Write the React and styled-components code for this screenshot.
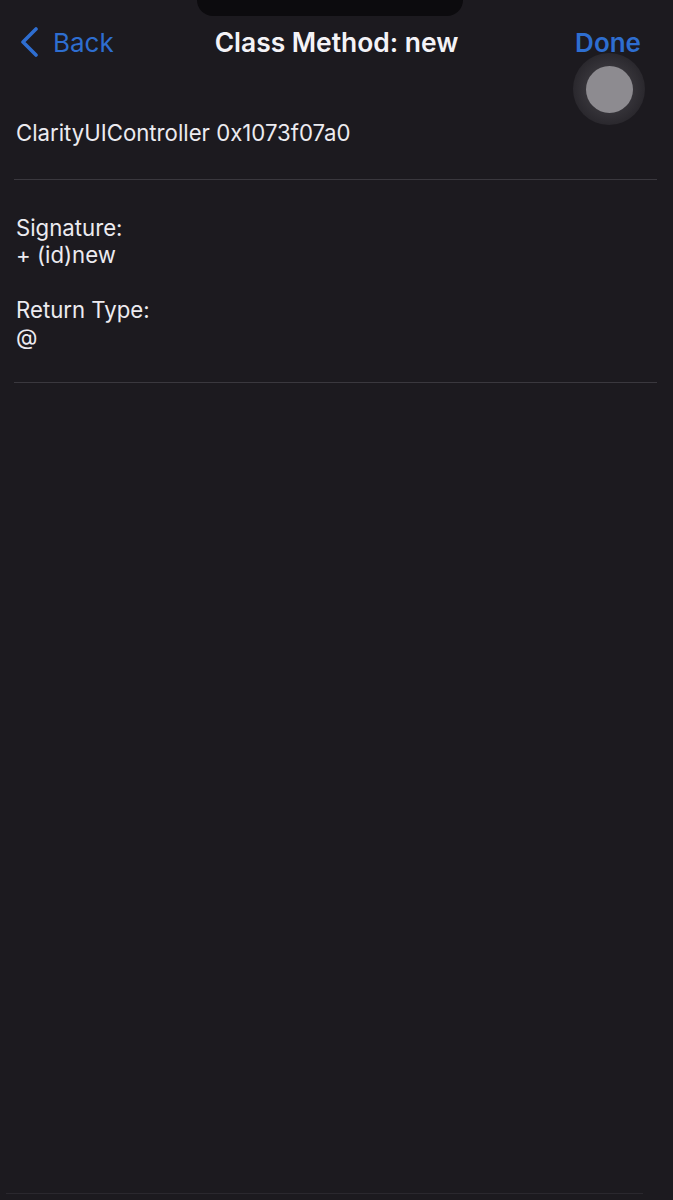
import React from 'react';
import styled, { createGlobalStyle } from 'styled-components';

const GlobalStyle = createGlobalStyle`
  html, body {
    margin: 0;
    padding: 0;
    background: #1c1a1f;
  }
  body {
    font-family: Inter, "Liberation Sans", sans-serif;
    -webkit-font-smoothing: antialiased;
  }
`;

const Screen = styled.div`
  position: relative;
  width: 673px;
  height: 1200px;
  background: #1c1a1f;
  overflow: hidden;
  color: #ecebf0;
`;

const Notch = styled.div`
  position: absolute;
  top: 0;
  left: 197px;
  width: 266px;
  height: 16px;
  background: #0c0b0e;
  border-radius: 0 0 16px 16px;
`;

const NavBar = styled.header`
  display: grid;
  grid-template-columns: 1fr auto 1fr;
  align-items: center;
  height: 84px;
  padding: 0 32px 0 19px;
`;

const NavButton = styled.button`
  display: flex;
  align-items: center;
  gap: 14px;
  justify-self: ${(p) => (p.$right ? 'end' : 'start')};
  background: none;
  border: none;
  padding: 0;
  color: #2e6ed0;
  font-family: inherit;
  font-size: 26px;
  font-weight: ${(p) => (p.$bold ? 600 : 400)};
  cursor: pointer;
`;

const Title = styled.h1`
  margin: 0 0 0 13px;
  font-size: 26.4px;
  font-weight: 600;
  color: #f4f3f7;
`;

const Section = styled.section`
  display: flex;
  flex-direction: column;
  gap: ${(p) => p.$gap || 0}px;
  padding: ${(p) => p.$pad};
  margin: 0 16px 0 14px;
  border-bottom: 1.5px solid #3a383e;
`;

const Field = styled.div`
  display: flex;
  flex-direction: column;
  padding-left: 2px;
`;

const Line = styled.div`
  font-size: 22.2px;
  line-height: 27px;
  color: #ecebf0;
`;

const Touch = styled.div`
  position: absolute;
  left: 573px;
  top: 53px;
  width: 72px;
  height: 72px;
  border-radius: 50%;
  background: radial-gradient(circle, rgba(120,118,124,0.5) 0%, rgba(70,68,74,0.45) 60%, rgba(40,38,44,0) 100%);
  display: flex;
  align-items: center;
  justify-content: center;
`;

const TouchDot = styled.div`
  width: 47px;
  height: 47px;
  border-radius: 50%;
  background: #8d8b90;
`;

const BottomLine = styled.div`
  position: absolute;
  left: 6px;
  right: 30px;
  bottom: 6px;
  height: 1px;
  background: #2a282e;
`;

const Chevron = () => (
  <svg width="20" height="30" viewBox="0 0 20 30" fill="none">
    <path d="M17 2 L4 15 L17 28" stroke="#2e6ed0" strokeWidth="3.6" strokeLinecap="round" strokeLinejoin="round" />
  </svg>
);

export default function App() {
  return (
    <Screen>
      <GlobalStyle />
      <Notch />
      <NavBar>
        <NavButton>
          <Chevron />
          Back
        </NavButton>
        <Title>Class Method: new</Title>
        <NavButton $right $bold>Done</NavButton>
      </NavBar>
      <Section $pad="35px 0 33px">
        <Field>
          <Line>ClarityUIController 0x1073f07a0</Line>
        </Field>
      </Section>
      <Section $pad="34px 0 32px" $gap={28}>
        <Field>
          <Line>Signature:</Line>
          <Line>+ (id)new</Line>
        </Field>
        <Field>
          <Line>Return Type:</Line>
          <Line>@</Line>
        </Field>
      </Section>
      <Touch>
        <TouchDot />
      </Touch>
      <BottomLine />
    </Screen>
  );
}
